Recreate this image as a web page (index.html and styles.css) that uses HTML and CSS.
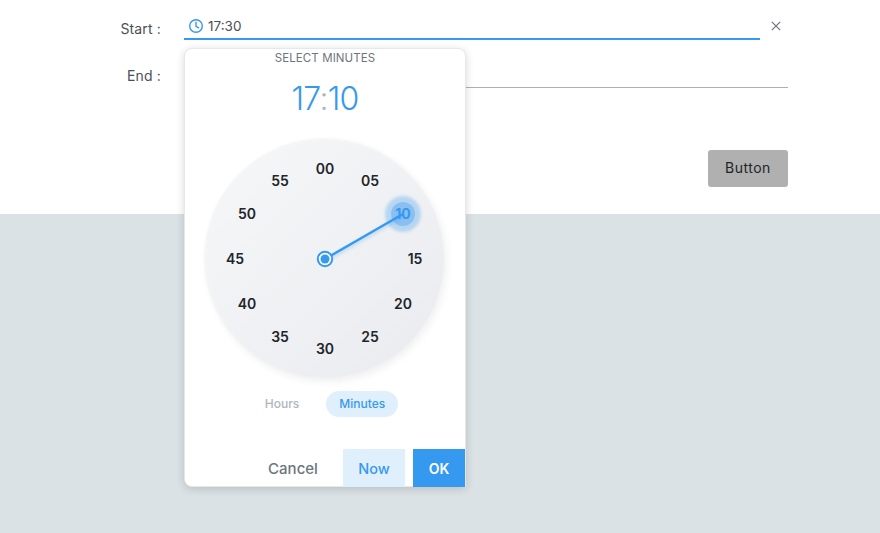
FILE: index.html
```html
<!DOCTYPE html>
<html lang="en">
<head>
  <meta charset="UTF-8" />
  <title>Time Picker</title>
  <link rel="stylesheet" href="styles.css">
</head>
<body>
  <div class="top">
    <!-- Start / End fields -->
    <div class="row row-start">
      <label class="label">Start :</label>
      <div class="field field-active">
        <svg class="clock-icon" width="16" height="16" viewBox="0 0 16 16" fill="none" stroke="#3699f0" stroke-width="1.4">
          <circle cx="8" cy="8" r="6.3"/>
          <path d="M8 4.2V8.3L10.6 9.8" stroke-linecap="round"/>
        </svg>
        <span class="value">17:30</span>
      </div>
      <svg class="clear" width="10" height="10" viewBox="0 0 10 10" stroke="#6c757d" stroke-width="1.2">
        <path d="M0.8 0.8L9.2 9.2M9.2 0.8L0.8 9.2"/>
      </svg>
    </div>
    <div class="row row-end">
      <label class="label">End :</label>
      <div class="field"></div>
    </div>
    <div class="actions">
      <button class="btn">Button</button>
    </div>
  </div>
  <div class="bottom"></div>

  <!-- Time picker popup -->
  <div class="picker">
    <div class="picker-title">SELECT MINUTES</div>
    <div class="picker-time">17<span class="colon">:</span>10</div>
    <div class="dial">
      <svg class="hand" width="240" height="240" viewBox="0 0 240 240" fill="none">
        <defs>
          <filter id="soft" x="-50%" y="-50%" width="200%" height="200%">
            <feGaussianBlur stdDeviation="1.5"/>
          </filter>
        </defs>
        <circle cx="198" cy="75" r="18" fill="#3699f0" opacity="0.3" filter="url(#soft)"/>
        <circle cx="198" cy="75" r="12" fill="#3699f0" opacity="0.35"/>
        <line x1="120" y1="122" x2="198" y2="77" stroke="#3699f0" stroke-width="4" opacity="0.2" filter="url(#soft)"/>
        <line x1="120" y1="120" x2="198" y2="75" stroke="#3699f0" stroke-width="2.4"/>
        <circle cx="120" cy="120" r="7.2" fill="#fff" stroke="#3699f0" stroke-width="2"/>
        <circle cx="120" cy="120" r="4.5" fill="#3699f0"/>
      </svg>
      <span class="num n00">00</span>
      <span class="num n05">05</span>
      <span class="num n10 num-active">10</span>
      <span class="num n15">15</span>
      <span class="num n20">20</span>
      <span class="num n25">25</span>
      <span class="num n30">30</span>
      <span class="num n35">35</span>
      <span class="num n40">40</span>
      <span class="num n45">45</span>
      <span class="num n50">50</span>
      <span class="num n55">55</span>
    </div>
    <div class="tabs">
      <span class="tab">Hours</span>
      <span class="tab tab-active">Minutes</span>
    </div>
    <div class="picker-footer">
      <button class="pbtn pbtn-cancel">Cancel</button>
      <button class="pbtn pbtn-now">Now</button>
      <button class="pbtn pbtn-ok">OK</button>
    </div>
  </div>
</body>
</html>
```

FILE: styles.css
```css
* { box-sizing: border-box; margin: 0; padding: 0; }
html, body { height: 100%; }
body {
  background: #dbe2e5;
  font-family: Inter, "Noto Sans", sans-serif;
  color: #495057;
  position: relative;
  overflow: hidden;
}
.top {
  height: 214px;
  background: #fff;
  padding: 14px 92px 0 0;
}
.row { display: flex; align-items: flex-end; }
.row-end { margin-top: 21px; }
.label {
  width: 161px;
  margin-right: 23px;
  text-align: right;
  font-size: 14px;
  letter-spacing: 0.15px;
  line-height: 20px;
  padding-bottom: 1px;
  color: #495057;
}
.row-end .label { padding-bottom: 2px; }
.field {
  flex: 1;
  height: 27px;
  border-bottom: 1px solid #b0b0b0;
  display: flex;
  align-items: center;
  gap: 4px;
  padding-left: 4px;
}
.field-active {
  height: 26px;
  border-bottom: 2px solid #3699f0;
  padding-bottom: 1px;
}
.value { font-size: 13.5px; color: #495057; }
.clock-icon { flex: none; }
.clear { margin: 0 7px 9px 11px; flex: none; }
.actions { display: flex; justify-content: flex-end; margin-top: 62px; }
.btn {
  width: 80px;
  height: 37px;
  padding-bottom: 2px;
  background: #b0b0b0;
  border: none;
  border-radius: 3px;
  font: 14px Inter, sans-serif;
  letter-spacing: 0.5px;
  color: #212529;
}

/* picker */
.picker {
  position: absolute;
  left: 184px;
  top: 48px;
  width: 282px;
  height: 439px;
  background: #fff;
  border: 1px solid #e6e8ec;
  border-radius: 8px 8px 0 8px;
  box-shadow: 0 2px 8px rgba(0,0,0,0.16);
  display: flex;
  flex-direction: column;
  align-items: center;
}
.picker-title {
  font-size: 11.5px;
  line-height: 16px;
  margin-top: 1px;
  letter-spacing: 0.1px;
  color: #6c757d;
}
.picker-time {
  font-size: 32px;
  font-weight: 300;
  line-height: 40px;
  margin-top: 13px;
  color: #3699f0;
  letter-spacing: -0.8px;
}
.colon { color: #adb5bd; }
.dial {
  width: 238px;
  height: 238px;
  margin-top: 21px;
  border-radius: 50%;
  position: relative;
  background: linear-gradient(135deg, #f6f7f9, #e9ebee);
  box-shadow: 2px 3px 8px rgba(0,0,0,0.07), -1px -1px 3px rgba(0,0,0,0.05);
}
.hand { position: absolute; left: -1px; top: -1px; }
.num {
  position: absolute;
  width: 30px;
  margin: -11px 0 0 -16px;
  text-align: center;
  font-size: 14px;
  font-weight: 600;
  line-height: 20px;
  color: #212529;
}
.num-active { color: #3699f0; font-weight: 700; }
.n00 { left: 120px; top: 30px; }
.n05 { left: 165px; top: 42px; }
.n10 { left: 198px; top: 75px; }
.n15 { left: 210px; top: 120px; }
.n20 { left: 198px; top: 165px; }
.n25 { left: 165px; top: 198px; }
.n30 { left: 120px; top: 210px; }
.n35 { left: 75px; top: 198px; }
.n40 { left: 42px; top: 165px; }
.n45 { left: 30px; top: 120px; }
.n50 { left: 42px; top: 75px; }
.n55 { left: 75px; top: 42px; }
.tabs {
  display: flex;
  align-items: center;
  gap: 14px;
  margin-top: 13px;
}
.tab {
  font-size: 12px;
  font-weight: 500;
  line-height: 26px;
  padding: 0 13px;
  border-radius: 13px;
  color: #adb5bd;
}
.tab-active {
  background: #e0effc;
  color: #3699f0;
}
.picker-footer {
  margin-top: auto;
  margin-bottom: -1px;
  align-self: flex-end;
  display: flex;
  gap: 8px;
}
.pbtn {
  height: 38px;
  border: none;
  background: none;
  font: 500 15px Inter, sans-serif;
}
.pbtn-cancel { width: 76px; color: #6c757d; margin-right: -8px; padding-right: 8px; }
.pbtn-now { width: 62px; margin-left: 8px; background: #e0effc; color: #3699f0; font-size: 14.5px; }
.pbtn-ok { width: 52px; background: #3699f0; color: #fff; font-weight: 600; font-size: 14px; }
```
